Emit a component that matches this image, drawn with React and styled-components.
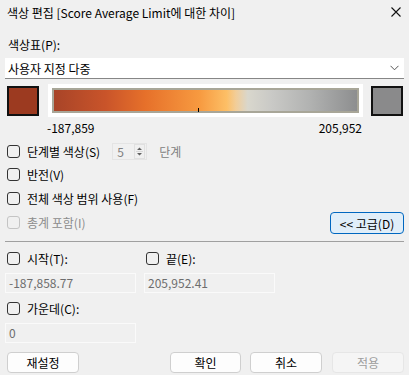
import styled, { createGlobalStyle } from 'styled-components'

const GlobalStyle = createGlobalStyle`
  html, body {
    margin: 0;
    padding: 0;
    background: #f0f0f0;
  }
  body {
    font-family: "Noto Sans CJK KR", "Noto Sans", sans-serif;
    font-size: 12px;
    color: #000;
  }
`

const Dialog = styled.div`
  width: 409px;
  height: 375px;
  background: #f0f0f0;
  display: flex;
  flex-direction: column;
  overflow: hidden;
`

const TitleBar = styled.div`
  height: 24px;
  display: flex;
  align-items: center;
  justify-content: space-between;
  padding: 0 4px 0 7px;
  font-size: 12px;
`

const CloseIcon = styled.svg`
  width: 10px;
  height: 10px;
  margin-right: 4px;
`

const Body = styled.div`
  display: flex;
  flex-direction: column;
  padding: 0 5px;
`

const FieldLabel = styled.div`
  height: 18px;
  line-height: 18px;
  margin-top: 12px;
  padding-left: 3px;
`

const Select = styled.div`
  height: 20px;
  margin-top: 4px;
  background: #fff;
  border-bottom: 1px solid #868686;
  display: flex;
  align-items: center;
  justify-content: space-between;
  padding: 0 5px 0 3px;
`

const ColorRow = styled.div`
  display: flex;
  align-items: center;
  justify-content: space-between;
  margin-top: 5px;
  padding: 0 1px 0 2px;
`

const Swatch = styled.div`
  width: 28px;
  height: 26px;
  border: 2px solid #111;
  background: ${p => p.$color};
`

const RampFrame = styled.div`
  position: relative;
  width: 307px;
  height: 25px;
  padding: 4px;
  background: #fff;
`

const Ramp = styled.div`
  height: 21px;
  border: 2px solid #a8a698;
  background: linear-gradient(
    to right,
    #a84428 0%,
    #c9542a 17%,
    #e6702a 30%,
    #f79a40 48%,
    #fdbf66 57%,
    #f2cd98 60%,
    #d9d7cd 64%,
    #c9c9c6 72%,
    #b2b3b2 84%,
    #8d8e8f 100%
  );
`

const Tick = styled.div`
  position: absolute;
  left: 150px;
  bottom: 5px;
  width: 1px;
  height: 4px;
  background: #000;
`

const RangeLabels = styled.div`
  display: flex;
  justify-content: space-between;
  width: 315px;
  margin: 2px 0 0 42px;
  line-height: 18px;
`

const CheckRow = styled.div`
  display: flex;
  align-items: center;
  height: 20px;
  margin-top: ${p => p.$gap ?? 3.5}px;
  padding-left: 2px;
  color: ${p => (p.$disabled ? '#8c8c8c' : '#000')};
`

const Box = styled.span`
  width: 11px;
  height: 11px;
  border: 1px solid ${p => (p.$disabled ? '#c4c4c4' : '#333')};
  border-radius: 3px;
  margin-right: 7px;
  flex-shrink: 0;
`

const Spin = styled.div`
  display: flex;
  align-items: center;
  width: 35px;
  height: 17px;
  margin-left: 12px;
  border: 1px solid #e4e4e4;
  color: #808080;
  padding-left: 4px;
  box-sizing: border-box;
  justify-content: space-between;
`

const SpinArrows = styled.svg`
  width: 11px;
  height: 15px;
  margin-right: 1px;
`

const Unit = styled.span`
  margin-left: 12px;
  color: #808080;
`

const AdvancedRow = styled.div`
  display: flex;
  align-items: center;
  justify-content: space-between;
`

const AdvancedButton = styled.button`
  width: 74px;
  height: 22px;
  margin-top: 4px;
  border: 1px solid #0067c0;
  border-radius: 4px;
  background: #e0eef9;
  font: inherit;
  color: #000;
  padding: 0;
`

const Separator = styled.div`
  height: 1px;
  background: #a0a0a0;
  margin-top: 7px;
`

const PairRow = styled.div`
  display: flex;
  gap: 8px;
`

const Column = styled.div`
  display: flex;
  flex-direction: column;
  width: 131px;
`

const TextInput = styled.div`
  height: 20px;
  margin-top: 5px;
  border: 1px solid #fafafa;
  box-sizing: border-box;
  padding-left: 3px;
  line-height: 18px;
  color: #6d6d6d;
  background: #f0f0f0;
`

const Footer = styled.div`
  display: flex;
  align-items: center;
  margin-top: 9px;
  padding-left: 2px;
`

const Button = styled.button`
  width: ${p => p.$w ?? 72}px;
  height: 21px;
  margin-left: ${p => p.$ml ?? 0}px;
  border: 1px solid ${p => (p.disabled ? '#e6e6e6' : '#cfcfcf')};
  border-radius: 4px;
  background: ${p => (p.disabled ? '#f5f5f5' : '#fdfdfd')};
  color: ${p => (p.disabled ? '#9d9d9d' : '#000')};
  font: inherit;
  padding: 0;
`

function Check({ children, disabled, gap }) {
  return (
    <CheckRow $disabled={disabled} $gap={gap}>
      <Box $disabled={disabled} />
      {children}
    </CheckRow>
  )
}

export default function App() {
  return (
    <Dialog>
      <GlobalStyle />
      <TitleBar>
        <span>색상 편집 [Score Average Limit에 대한 차이]</span>
        <CloseIcon viewBox="0 0 10 10">
          <path d="M0.5 0.5 L9.5 9.5 M9.5 0.5 L0.5 9.5" stroke="#111" strokeWidth="1.1" />
        </CloseIcon>
      </TitleBar>
      <Body>
        <FieldLabel>색상표(P):</FieldLabel>
        <Select>
          <span>사용자 지정 다중</span>
          <svg width="9" height="6" viewBox="0 0 9 6">
            <path d="M0.5 0.8 L4.5 4.8 L8.5 0.8" fill="none" stroke="#555" strokeWidth="1" />
          </svg>
        </Select>
        <ColorRow>
          <Swatch $color="#9c3a20" />
          <RampFrame>
            <Ramp />
            <Tick />
          </RampFrame>
          <Swatch $color="#8a8a8b" />
        </ColorRow>
        <RangeLabels>
          <span>-187,859</span>
          <span>205,952</span>
        </RangeLabels>
        <Check gap={4}>
          단계별 색상(S)
          <Spin>
            5
            <SpinArrows viewBox="0 0 11 15">
              <rect x="0.5" y="0.5" width="10" height="14" fill="none" stroke="#e0e0e0" />
              <path d="M3 6 L5.5 3.5 L8 6 Z M3 9 L5.5 11.5 L8 9 Z" fill="#606060" />
              <path d="M2 7.5 H9" stroke="#d8d8d8" />
            </SpinArrows>
          </Spin>
          <Unit>단계</Unit>
        </Check>
        <Check>반전(V)</Check>
        <Check>전체 색상 범위 사용(F)</Check>
        <AdvancedRow>
          <Check disabled>총계 포함(I)</Check>
          <AdvancedButton>&lt;&lt; 고급(D)</AdvancedButton>
        </AdvancedRow>
        <Separator />
        <PairRow>
          <Column>
            <Check gap={6}>시작(T):</Check>
            <TextInput>-187,858.77</TextInput>
          </Column>
          <Column>
            <Check gap={6}>끝(E):</Check>
            <TextInput>205,952.41</TextInput>
          </Column>
        </PairRow>
        <Column>
            <Check gap={5}>가운데(C):</Check>
            <TextInput>0</TextInput>
        </Column>
        <Footer>
          <Button>재설정</Button>
          <Button $w={71} $ml={91}>확인</Button>
          <Button $w={72} $ml={9}>취소</Button>
          <Button $w={72} $ml={10} disabled>적용</Button>
        </Footer>
      </Body>
    </Dialog>
  )
}
